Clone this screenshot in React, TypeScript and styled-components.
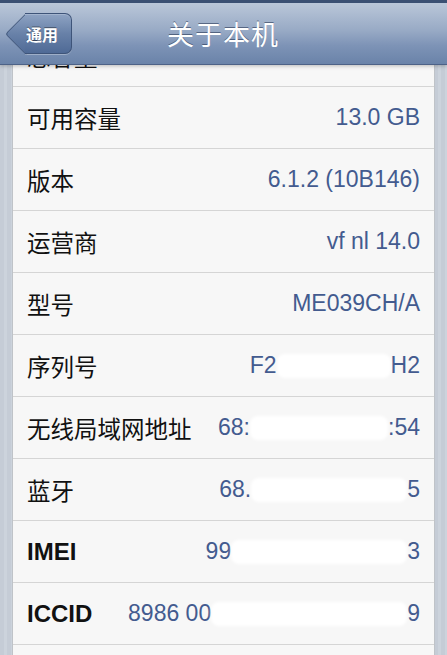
import React from "react";
import styled, { createGlobalStyle } from "styled-components";

const GlobalStyle = createGlobalStyle`
  html, body {
    margin: 0;
    padding: 0;
  }
  body {
    font-family: "Liberation Sans", "Noto Sans CJK SC", sans-serif;
    background: #c9d0da;
  }
`;

type Part = string | { hidden: number };

type Item = { label: string; value: Part[]; latin?: boolean };

// the first row is scrolled under the nav bar, the last one starts at the bottom edge
const items: Item[] = [
  { label: "总容量", value: [] },
  { label: "可用容量", value: ["13.0 GB"] },
  { label: "版本", value: ["6.1.2 (10B146)"] },
  { label: "运营商", value: ["vf nl 14.0"] },
  { label: "型号", value: ["ME039CH/A"] },
  { label: "序列号", value: ["F2", { hidden: 114 }, "H2"] },
  { label: "无线局域网地址", value: ["68:", { hidden: 138 }, ":54"] },
  { label: "蓝牙", value: ["68.", { hidden: 156 }, "5"] },
  { label: "IMEI", value: ["99", { hidden: 176 }, "3"], latin: true },
  { label: "ICCID", value: ["8986 00", { hidden: 196 }, "9"], latin: true },
  { label: "", value: [] },
];

const App: React.FC = () => {
  return (
    <Screen>
      <GlobalStyle />
      <NavBar>
        <BackButton>通用</BackButton>
        <Title>关于本机</Title>
      </NavBar>
      <Viewport>
        <Group>
          {items.map((item, n) => (
            <Row key={n}>
              <Label $latin={item.latin}>{item.label}</Label>
              <Value>
                {item.value.map((part, i) =>
                  typeof part === "string" ? (
                    <span key={i}>{part}</span>
                  ) : (
                    <Smudge key={i} $width={part.hidden} />
                  )
                )}
              </Value>
            </Row>
          ))}
        </Group>
      </Viewport>
    </Screen>
  );
};

const Screen = styled.div`
  width: 447px;
  height: 655px;
  overflow: hidden;
  display: flex;
  flex-direction: column;
  background: repeating-linear-gradient(90deg, #c5ccd6 0 4px, #ccd3dc 4px 7px);
`;

const NavBar = styled.div`
  position: relative;
  z-index: 2;
  flex-shrink: 0;
  height: 61px;
  border-top: 3px solid #3b5073;
  background: linear-gradient(#bac7d9 0%, #98aac5 45%, #7d93b6 70%, #6a83a9 100%);
  box-shadow: 0 1px 0 #4d6287, 0 2px 4px rgba(0, 0, 0, 0.25);
  display: flex;
  align-items: center;
`;

const BackButton = styled.div`
  position: relative;
  height: 41px;
  width: 47px;
  margin-left: 25px;
  box-sizing: border-box;
  padding-left: 1px;
  display: flex;
  align-items: center;
  color: #fff;
  font-size: 16px;
  font-weight: bold;
  text-shadow: 0 -1px 0 rgba(0, 0, 0, 0.45);
  border: 1px solid #3e5479;
  border-left: none;
  border-radius: 0 7px 7px 0;
  background: linear-gradient(#8ea3c3, #6881a8 50%, #4f6a96);
  box-shadow: inset 0 1px 0 rgba(255, 255, 255, 0.2), 0 1px 0 rgba(255, 255, 255, 0.3);

  &::before {
    content: "";
    position: absolute;
    z-index: -1;
    left: -14.5px;
    top: 5px;
    width: 29px;
    height: 29px;
    transform: rotate(45deg);
    border-left: 1px solid #3e5479;
    border-bottom: 1px solid #3e5479;
    border-radius: 0 0 0 4px;
    background: linear-gradient(135deg, #8ea3c3, #6881a8 50%, #4f6a96);
  }
`;

const Title = styled.div`
  flex: 1;
  margin-left: 95px;
  color: #fff;
  font-size: 27px;
  letter-spacing: 1px;
  text-shadow: 0 -1px 0 rgba(40, 55, 85, 0.6);
`;

const Viewport = styled.div`
  flex: 1;
  overflow: hidden;
`;

const Group = styled.div`
  margin: -39px 12px 0;
  background: #f7f7f7;
  border-left: 1px solid #bfc3c8;
  border-right: 1px solid #bfc3c8;
`;

const Row = styled.div`
  height: 61px;
  border-bottom: 1px solid #d5d5d5;
  display: flex;
  align-items: center;
  justify-content: space-between;
  padding: 0 14px;
`;

const Label = styled.div<{ $latin?: boolean }>`
  color: #111;
  font-size: ${(p) => (p.$latin ? "24px" : "23.5px")};
  font-weight: ${(p) => (p.$latin ? "bold" : "normal")};
  white-space: nowrap;
`;

const Value = styled.div`
  color: #435b8f;
  font-size: 23px;
  white-space: nowrap;
  display: flex;
  align-items: center;
`;

const Smudge = styled.span<{ $width: number }>`
  display: inline-block;
  width: ${(p) => p.$width}px;
  height: 24px;
  background: #fff;
  border-radius: 8px;
  filter: blur(1.5px);
`;

export default App;
